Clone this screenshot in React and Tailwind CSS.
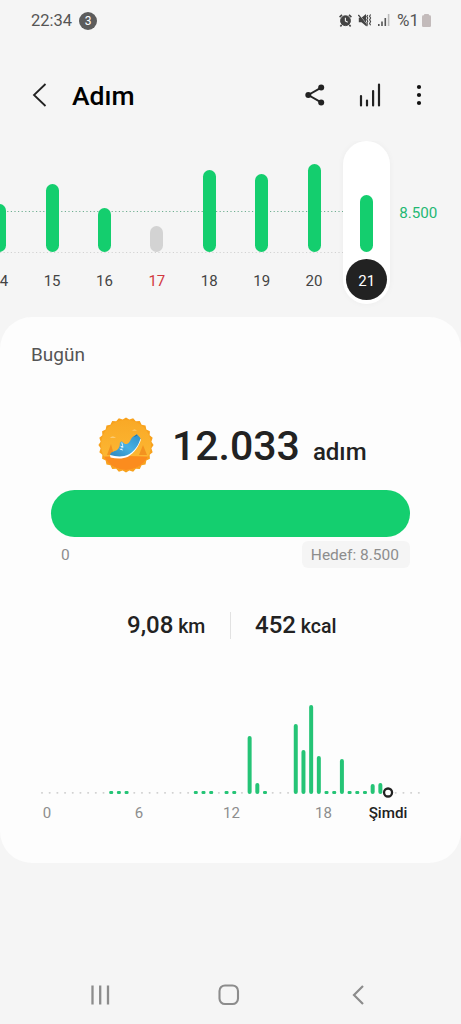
import React from "react";

const days = [
  { day: "14", height: 48 },
  { day: "15", height: 68 },
  { day: "16", height: 44 },
  { day: "17", height: 26, missed: true },
  { day: "18", height: 82 },
  { day: "19", height: 78 },
  { day: "20", height: 88 },
  { day: "21", height: 57, selected: true },
];

// half hour slots, slots that are not listed have no steps
const slots = {
  9: 3, 10: 3, 11: 3,
  20: 3, 21: 3, 22: 3, 24: 3, 25: 3,
  27: 58, 28: 11, 29: 3,
  33: 70, 34: 44, 35: 89, 36: 38, 37: 3, 38: 3,
  39: 35, 40: 3, 41: 3, 42: 3, 43: 10, 44: 11,
};
const NOW = 45;
const slotX = (i) => 42 + i * 7.69;

const StatusBar = () => (
  <div className="flex h-10 items-center justify-between pl-[31px] pr-[30px] text-[#555]">
    <div className="flex items-center gap-[7px] pt-px">
      <span className="text-[16.5px] leading-5">22:34</span>
      <span className="flex size-[18px] items-center justify-center rounded-full bg-[#5c5c5c] text-[12px] text-white">
        3
      </span>
    </div>
    <div className="flex items-center">
      <svg width="13" height="13" viewBox="0 0 13 13" fill="none" stroke="#444">
        <circle cx="6.5" cy="6.7" r="4.9" fill="#444" />
        <path d="M.6 3.2 3 .9M12.4 3.2 10 .9M2.7 10.7l-1.3 1.7M10.3 10.7l1.3 1.7" strokeWidth="1.6" />
        <path d="M6.4 3.8V7l2.3 1.2" stroke="#f5f5f5" strokeWidth="1.1" />
      </svg>
      <svg className="ml-[6px]" width="14" height="14" viewBox="0 0 14 14" fill="none" stroke="#444">
        <path d="M.8 4.7h2.7L8 1v12L3.5 9.3H.8z" fill="#444" stroke="none" />
        <path d="m.8 1.3 9 11.2" stroke="#f5f5f5" strokeWidth="0.8" />
        <path d="m.4 2 9 11.2" strokeWidth="1.2" />
        <path d="m9.8 2-1 1.5 1 1.6-1 1.6 1 1.6-1 1.7 1 1.6M12.6 1.4l-1 1.8 1 1.8-1 1.8 1 1.8-1 1.8 1 1.8" strokeWidth="1.1" />
      </svg>
      <svg className="ml-[6px]" width="12" height="12" viewBox="0 0 12 12">
        <path d="M0 10h1.6v2H0zM3.2 7.5h1.6V12H3.2zM6.5 4h1.6v8H6.5z" fill="#555" />
        <path d="M9.8 0h1.6v12H9.8z" fill="#bbb" />
      </svg>
      <span className="ml-[7px] text-[17px] leading-5">%1</span>
      <svg className="ml-[3px]" width="9" height="13" viewBox="0 0 9 13" fill="#c3bbbb">
        <rect x="2" width="5" height="3" rx="0.8" />
        <rect y="1.2" width="9" height="11.8" rx="1.3" />
      </svg>
    </div>
  </div>
);

const Header = () => (
  <div className="flex h-[101px] items-center pl-[32px] pr-[39px] pt-[9px] text-[#222]">
    <svg width="16" height="24" viewBox="0 0 16 24" fill="none" stroke="#222" strokeWidth="1.8">
      <path d="M13.5 1 2 12l11.5 11" />
    </svg>
    <h1 className="ml-[24px] pt-px text-[26.5px] font-medium leading-8 text-black">Adım</h1>
    <svg className="ml-auto" width="20" height="22" viewBox="0 0 20 22" fill="#222">
      <path d="M16.2 3.6 3.3 11l12.9 7.4" fill="none" stroke="#222" strokeWidth="1.9" />
      <circle cx="3.3" cy="11" r="3" />
      <circle cx="16.2" cy="3.6" r="3" />
      <circle cx="16.2" cy="18.4" r="3" />
    </svg>
    <svg className="ml-[34px]" width="22" height="24" viewBox="0 0 22 24" stroke="#222" strokeWidth="2.2" strokeLinecap="round">
      <path d="M2 13v9.5M8 17.5v5M14.1 8v14.5M20 1.5v21" />
    </svg>
    <svg className="ml-[35px]" width="6" height="22" viewBox="0 0 6 22" fill="#111">
      <circle cx="3" cy="3" r="2.1" />
      <circle cx="3" cy="11" r="2.1" />
      <circle cx="3" cy="19" r="2.1" />
    </svg>
  </div>
);

const DayColumn = ({ day, height, missed, selected }) => (
  <div
    className={
      selected
        ? "relative mx-[3px] flex h-[163px] w-[47px] flex-col items-center rounded-full bg-white shadow-[0_0_6px_rgba(0,0,0,0.04)]"
        : "relative flex h-[163px] w-[52.4px] flex-col items-center"
    }
  >
    <div className="flex h-[111px] items-end">
      <div
        className={missed ? "w-[13px] rounded-full bg-[#d3d3d3]" : "w-[13px] rounded-full bg-[#14ce6e]"}
        style={{ height }}
      />
    </div>
    <div
      className={
        selected
          ? "mt-[7px] flex size-[41px] items-center justify-center rounded-full bg-[#222] pt-[3px] text-[15px] text-white"
          : missed
            ? "mt-[7px] flex size-[41px] items-center justify-center pt-[3px] text-[15px] text-[#d2393f]"
            : "mt-[7px] flex size-[41px] items-center justify-center pt-[3px] text-[15px] text-[#444]"
      }
    >
      {day}
    </div>
  </div>
);

const WeekChart = () => (
  <div className="relative flex h-[176px] overflow-hidden">
    <svg className="absolute left-0 top-0" width="461" height="120" viewBox="0 0 461 120">
      <path d="M0 70.5h345" stroke="#6fae91" strokeDasharray="1.2 2.4" />
      <path d="M0 111.5h345" stroke="#d2d2d2" strokeDasharray="1.2 2.4" />
    </svg>
    <div className="-ml-[26.5px] flex shrink-0">
      {days.map((item) => (
        <DayColumn key={item.day} {...item} />
      ))}
    </div>
    <span className="ml-[6px] mt-[62px] text-[15.2px] leading-5 text-[#1fb873]">8.500</span>
  </div>
);

const badgePoints = Array.from({ length: 48 }, (_, i) => {
  const r = i % 2 ? 25.6 : 27.6;
  const a = (i * Math.PI) / 24;
  return `${28 + r * Math.sin(a)},${28 - r * Math.cos(a)}`;
}).join(" ");

const StepBadge = () => (
  <svg width="56" height="56" viewBox="0 0 56 56">
    <defs>
      <linearGradient id="sky" x1="0" y1="0" x2="0" y2="1">
        <stop offset="0" stopColor="#f9a825" />
        <stop offset="1" stopColor="#fdbc38" />
      </linearGradient>
      <linearGradient id="shoe" x1="0" y1="1" x2="1" y2="0">
        <stop offset="0" stopColor="#2f86bd" />
        <stop offset="0.5" stopColor="#48b0e2" />
        <stop offset="1" stopColor="#2f8fc8" />
      </linearGradient>
      <clipPath id="disc">
        <circle cx="28" cy="28" r="25" />
      </clipPath>
    </defs>
    <polygon points={badgePoints} fill="#f8a21d" />
    <g clipPath="url(#disc)">
      <rect width="56" height="56" fill="url(#sky)" />
      <path d="M0 40q28-2 56 0v17H0z" fill="#fb8c1e" />
      <path d="m13 27 3 11h-7zM45 28l4 10h-8z" fill="#f3921f" />
      <path d="M13 20q1.500-1 3-.3l2 1h-6zM35 13q1.500-1 3 0l1 .6h-5z" fill="#fdd489" />
    </g>
    <path d="M12 38.200 41.700 21.800l1.300.8C41 29 36.500 36 30 39.700c-5.500 2.500-12 2-17.500.7z" fill="#fff" />
    <path d="M12.200 38c-.2-2.500 3-3.300 5.300-4.300 3.500-1.500 4.500-4.200 4.300-8l1.700-1.500 2.500 2c1.200 1.500 3.500 1 5-.7 1.800-2 2-4.500 4.200-6l3.800-2.200c1 1.200 2.500 2.400 3.500 4.200-1.500 5.500-5 12-11.500 15.700-6 3.200-13 2.400-18.800.8z" fill="url(#shoe)" />
    <path d="M23.800 25.500l.8 3-.8 3M22.500 29.200l3 .8M21.800 32l3 1" stroke="#e6f6ff" strokeWidth="1" fill="none" />
    <path d="M36.500 19.500l2.500-1.500" stroke="#2573a8" strokeWidth="1" />
  </svg>
);

const HourChart = () => (
  <div>
    <svg className="block" width="461" height="108" viewBox="0 692 461 108">
      {Array.from({ length: 50 }, (_, i) => {
        if (i === NOW) return null;
        const h = slots[i];
        return h ? (
          <rect key={i} x={slotX(i) - 2} y={794 - h} width="4" height={h} rx={h > 3 ? 2 : 1.2} fill="#25c476" />
        ) : (
          <rect key={i} x={slotX(i) - 1} y="792" width="2" height="1.8" rx="0.8" fill="#d0d0d0" />
        );
      })}
      <circle cx={slotX(NOW)} cy="792.5" r="4" fill="#fff" stroke="#222" strokeWidth="2.3" />
    </svg>
    <div className="flex pl-[1px] text-center text-[15px] leading-[26px] text-[#8d8d8d]">
      <span className="w-[92px]">0</span>
      <span className="w-[92px]">6</span>
      <span className="w-[93px]">12</span>
      <span className="w-[91px]">18</span>
      <span className="-ml-[4px] w-[46px] whitespace-nowrap text-[15.2px] font-medium text-[#222]">Şimdi</span>
    </div>
  </div>
);

const TodayCard = () => (
  <div className="h-[546px] rounded-[32px] bg-[#fdfdfd]">
    <p className="pl-[31px] pt-[26px] text-[19px] leading-6 text-[#555]">Bugün</p>
    <div className="mt-[50px] flex h-[56px] items-center pl-[98px]">
      <StepBadge />
      <p className="ml-[18px] whitespace-nowrap pt-px font-medium text-[#222]">
        <span className="text-[41px] leading-[56px]">12.033</span>
        <span className="ml-[13px] text-[24px]">adım</span>
      </p>
    </div>
    <div className="mx-[51px] mt-[17px] h-[47px] rounded-full bg-[#14cf6f]" />
    <div className="mx-[51px] mt-[4px] flex h-[27px] justify-between text-[15.5px] leading-[28px] text-[#8d8d8d]">
      <span className="pl-[10px]">0</span>
      <span className="rounded-md bg-[#f5f5f5] pl-[9px] pr-[11px]">Hedef: 8.500</span>
    </div>
    <div className="mt-[43px] flex h-[28px] items-center pl-[127px] font-medium text-[#222]">
      <p className="w-[103px] whitespace-nowrap text-[24px]">
        9,08<span className="text-[19.5px]"> km</span>
      </p>
      <div className="h-[27px] w-px bg-[#e2e2e2]" />
      <p className="ml-[24px] whitespace-nowrap text-[24px]">
        452<span className="text-[19.5px]"> kcal</span>
      </p>
    </div>
    <div className="mt-[53px]">
      <HourChart />
    </div>
  </div>
);

const NavBar = () => (
  <div className="mt-[122px] flex h-5 items-center pl-[90px] pr-[97px]">
    <svg width="20" height="20" viewBox="0 0 20 20" stroke="#8c8c8c" strokeWidth="2.3">
      <path d="M2.5.5v19M10.2.5v19M18 .5v19" />
    </svg>
    <svg className="ml-[108px]" width="22" height="22" viewBox="0 0 22 22" fill="none" stroke="#8c8c8c" strokeWidth="2.1">
      <rect x="1.5" y="1.5" width="18.5" height="18.5" rx="5.5" />
    </svg>
    <svg className="ml-auto" width="12" height="20" viewBox="0 0 12 20" fill="none" stroke="#8c8c8c" strokeWidth="2.2">
      <path d="M11 1 2 10l9 9" />
    </svg>
  </div>
);

const App = () => {
  return (
    <div className="h-[1024px] w-[461px] overflow-hidden bg-[#f5f5f5] font-['Roboto',sans-serif]">
      <StatusBar />
      <Header />
      <WeekChart />
      <TodayCard />
      <NavBar />
    </div>
  );
};

export default App;
